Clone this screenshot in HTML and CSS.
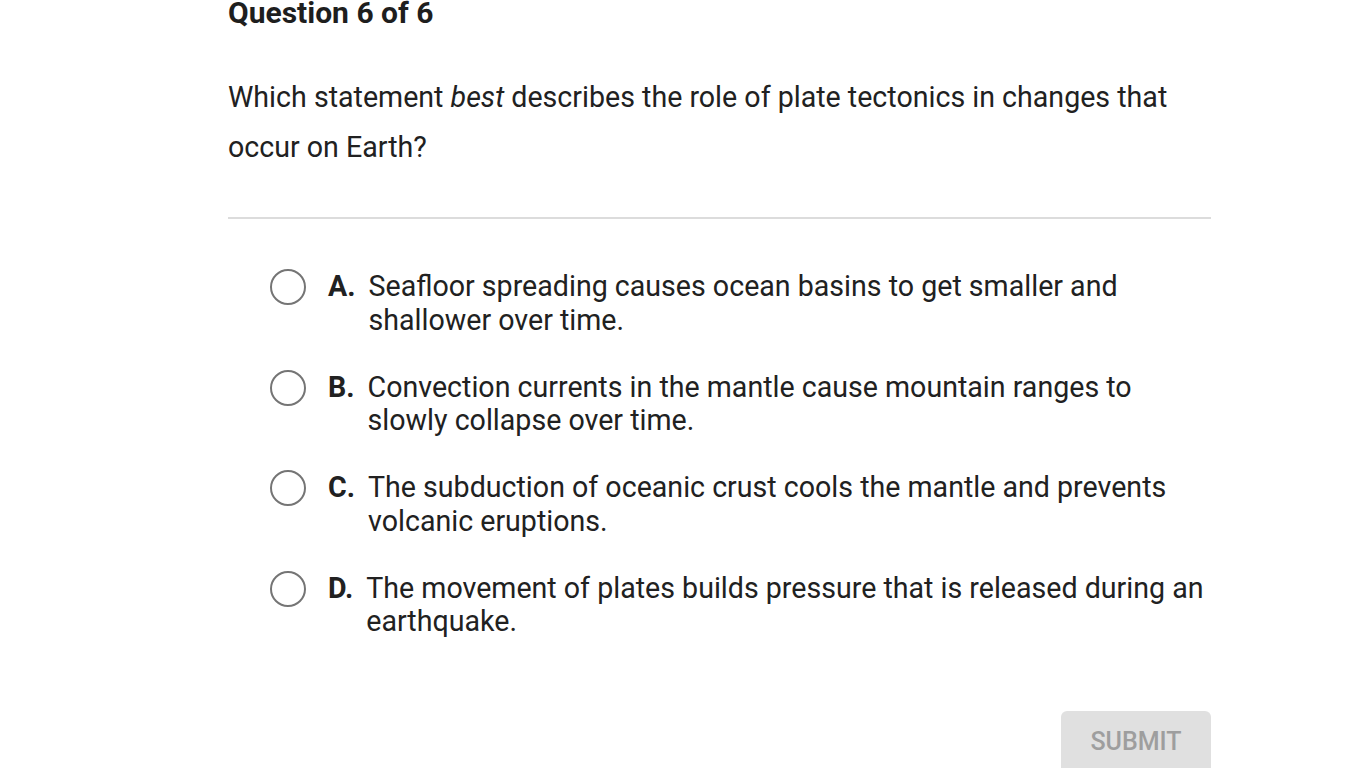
FILE: index.html
```html
<!DOCTYPE html>
<html>
<head>
<meta charset="utf-8">
<link rel="stylesheet" href="styles.css">
</head>
<body>
<main class="quiz">
  <h1 class="title">Question 6 of 6</h1>
  <p class="question">Which statement <em>best</em> describes the role of plate tectonics in changes that occur on Earth?</p>
  <hr class="divider">
  <ul class="options">
    <li class="option"><span class="radio"></span><span class="letter">A.</span><span class="text">Seafloor spreading causes ocean basins to get smaller and shallower over time.</span></li>
    <li class="option"><span class="radio"></span><span class="letter">B.</span><span class="text">Convection currents in the mantle cause mountain ranges to slowly collapse over time.</span></li>
    <li class="option"><span class="radio"></span><span class="letter">C.</span><span class="text">The subduction of oceanic crust cools the mantle and prevents volcanic eruptions.</span></li>
    <li class="option"><span class="radio"></span><span class="letter">D.</span><span class="text">The movement of plates builds pressure that is released during an earthquake.</span></li>
  </ul>
  <div class="actions"><button class="submit">SUBMIT</button></div>
</main>
</body>
</html>
```
FILE: styles.css
```css
html, body {
  margin: 0;
  padding: 0;
  background: #fff;
  overflow: hidden;
}
body {
  font-family: Roboto, "Liberation Sans", sans-serif;
  color: #212121;
}
.quiz {
  width: 983px;
  margin-left: 228px;
}
.title {
  margin: -2px 0 0 0;
  font-size: 30px;
  line-height: 30px;
  font-weight: 700;
  color: #1e1e1e;
}
.question {
  margin: 44px 0 0 0;
  font-size: 28.6px;
  line-height: 50px;
  color: #212121;
}
.divider {
  border: none;
  height: 2px;
  background: #dcdcdc;
  margin: 45px 0 0 0;
}
.options {
  list-style: none;
  margin: 51px 0 0 0;
  padding: 0 0 0 42px;
}
.option {
  display: flex;
  align-items: flex-start;
  font-size: 28.6px;
  line-height: 33.5px;
  margin-bottom: 33.5px;
}
.radio {
  flex: none;
  width: 36px;
  height: 36px;
  border: 2px solid #757575;
  border-radius: 50%;
  margin-right: 22px;
  margin-top: -1px;
  box-sizing: border-box;
}
.letter {
  font-weight: 700;
  margin-right: 13px;
  color: #212121;
}
.actions {
  display: flex;
  justify-content: flex-end;
  margin-top: 72px;
}
.submit {
  width: 150px;
  height: 64px;
  border: none;
  border-radius: 6px;
  background: #e0e0e0;
  color: #9e9e9e;
  font-family: Roboto, "Liberation Sans", sans-serif;
  font-size: 25px;
  font-weight: 500;
  padding: 0 0 2px 0;
}
```
